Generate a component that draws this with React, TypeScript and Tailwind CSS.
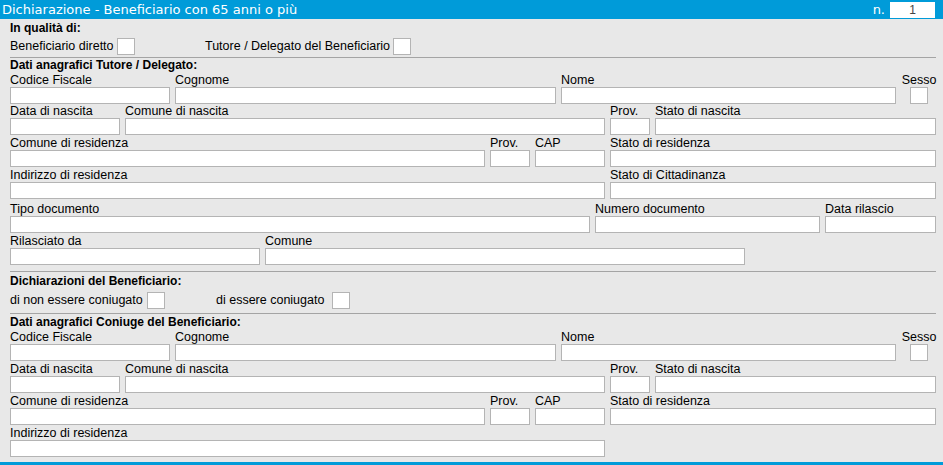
import React from "react";

type FieldProps = {
  label: string;
  w: string;
  center?: boolean;
  box?: string;
};

function Field({ label, w, center, box }: FieldProps) {
  return (
    <div className={`flex flex-col shrink-0 ${w} ${center ? "items-center" : ""}`}>
      <div className="h-[14px] leading-[14px] whitespace-nowrap">{label}</div>
      <div className={`h-[17px] border border-[#b4b4b4] bg-white ${box ?? "w-full"}`} />
    </div>
  );
}

function Check({ label, labelW, className }: { label: string; labelW: string; className?: string }) {
  return (
    <div className={`flex items-center gap-[4px] shrink-0 ${className ?? ""}`}>
      <span className={`whitespace-nowrap ${labelW}`}>{label}</span>
      <div className="w-[18px] h-[17px] border border-[#b4b4b4] bg-white" />
    </div>
  );
}

function Title({ children, className }: { children: React.ReactNode; className?: string }) {
  return <div className={`h-[14px] leading-[14px] font-bold text-[12px] ${className ?? ""}`}>{children}</div>;
}

function Separator({ className }: { className?: string }) {
  return <div className={`h-px bg-[#a4a4a4] ${className ?? ""}`} />;
}

function AnagraficaRows({ extended }: { extended: boolean }) {
  return (
    <>
      <div className="flex gap-[5px] mt-[1px]">
        <Field label="Codice Fiscale" w="w-[160px]" />
        <Field label="Cognome" w="w-[381px]" />
        <Field label="Nome" w="w-[335px]" />
        <Field label="Sesso" w="w-[36px]" center box="w-[18px]" />
      </div>
      <div className={`flex gap-[5px] ${extended ? "" : "mt-[1px]"}`}>
        <Field label="Data di nascita" w="w-[110px]" />
        <Field label="Comune di nascita" w="w-[480px]" />
        <Field label="Prov." w="w-[40px]" />
        <Field label="Stato di nascita" w="w-[281px]" />
      </div>
      <div className="flex gap-[5px] mt-[1px]">
        <Field label="Comune di residenza" w="w-[475px]" />
        <Field label="Prov." w="w-[40px]" />
        <Field label="CAP" w="w-[70px]" />
        <Field label="Stato di residenza" w="w-[326px]" />
      </div>
      <div className="flex gap-[5px] mt-[1px]">
        <Field label="Indirizzo di residenza" w="w-[595px]" />
        {extended && <Field label="Stato di Cittadinanza" w="w-[326px]" />}
      </div>
    </>
  );
}

export default function App() {
  return (
    <div className="w-[943px] h-[465px] bg-[#e8e8e8] flex flex-col text-[12.5px] text-black font-['Liberation_Sans',Arial,sans-serif] overflow-hidden">
      <div className="h-[19px] bg-[#009bd9] flex items-center justify-between pl-[2px] pr-[8px] text-white font-['DejaVu_Sans',sans-serif] text-[13px]">
        <span className="leading-[19px]">Dichiarazione - Beneficiario con 65 anni o più</span>
        <div className="flex items-center gap-[5px]">
          <span>n.</span>
          <div className="w-[45px] h-[16px] bg-white text-[#444] text-[12px] leading-[16px] text-center font-['Liberation_Sans',sans-serif]">
            1
          </div>
        </div>
      </div>

      <div className="flex-1 flex flex-col pl-[10px] pr-[7px]">
        <Title className="mt-[2px]">In qualità di:</Title>
        <div className="flex mt-[3px] h-[17px]">
          <Check label="Beneficiario diretto" labelW="w-[103px]" className="w-[195px]" />
          <Check label="Tutore / Delegato del Beneficiario" labelW="w-[184px]" />
        </div>
        <Separator className="mt-[2px]" />

        <Title>Dati anagrafici Tutore / Delegato:</Title>
        <AnagraficaRows extended />
        <div className="flex gap-[5px] mt-[3px]">
          <Field label="Tipo documento" w="w-[580px]" />
          <Field label="Numero documento" w="w-[225px]" />
          <Field label="Data rilascio" w="w-[111px]" />
        </div>
        <div className="flex gap-[5px] mt-[1px]">
          <Field label="Rilasciato da" w="w-[250px]" />
          <Field label="Comune" w="w-[480px]" />
        </div>
        <Separator className="mt-[6px]" />

        <Title className="mt-[2px]">Dichiarazioni del Beneficiario:</Title>
        <div className="flex mt-[4px] h-[17px]">
          <Check label="di non essere coniugato" labelW="w-[133px]" className="w-[206px]" />
          <Check label="di essere coniugato" labelW="w-[112px]" />
        </div>
        <Separator className="mt-[4px]" />

        <Title className="mt-[1px]">Dati anagrafici Coniuge del Beneficiario:</Title>
        <AnagraficaRows extended={false} />
      </div>

      <div className="h-[3px] bg-[#009bd9]" />
    </div>
  );
}
